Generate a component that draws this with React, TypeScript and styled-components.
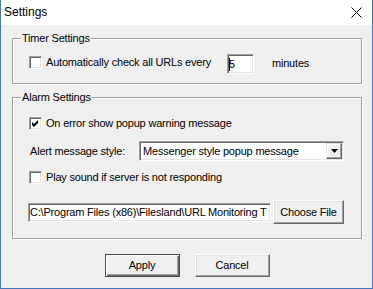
import React from 'react';
import styled, { createGlobalStyle } from 'styled-components';

const GlobalStyle = createGlobalStyle`
  html, body {
    margin: 0;
    padding: 0;
    background: #fff;
  }
  body {
    font-family: "Liberation Sans", Arial, sans-serif;
    font-size: 11px;
    line-height: 13px;
    letter-spacing: -0.2px;
    color: #000;
  }
`;

const Window = styled.div`
  width: 373px;
  height: 289px;
  box-sizing: border-box;
  border: 1px solid #4677bd;
  border-top: none;
  display: flex;
  flex-direction: column;
  background: #f0f0f0;
`;

const TitleBar = styled.div`
  height: 25px;
  flex: none;
  background: #fff;
  display: flex;
  align-items: center;
  justify-content: space-between;
  padding: 0 10px 0 3px;
`;

const Title = styled.span`
  font-size: 12px;
  letter-spacing: 0;
`;

const Client = styled.div`
  flex: 1;
  display: flex;
  flex-direction: column;
  padding: 7px 10px 0 11px;
`;

const Group = styled.fieldset<{ $pad: string; $mt?: number }>`
  margin: ${({ $mt }) => $mt || 0}px 0 0 0;
  padding: ${({ $pad }) => $pad};
  min-width: 0;
  border: 1px solid #a0a0a0;
  box-shadow: inset 1px 1px 0 #fff, 1px 1px 0 #fff;
  display: flex;
  flex-direction: column;
`;

const Legend = styled.legend`
  padding: 0 1px;
  margin-left: -8px;
  line-height: 13px;
  background: #f0f0f0;
`;

const Row = styled.div<{ $h: number; $mt?: number; $align?: string }>`
  display: flex;
  align-items: ${({ $align }) => $align || 'center'};
  height: ${({ $h }) => $h}px;
  margin-top: ${({ $mt }) => $mt || 0}px;
`;

const CheckLabel = styled.label<{ $mt?: number }>`
  display: flex;
  align-items: center;
  gap: 4px;
  height: 13px;
  margin-top: ${({ $mt }) => $mt || 0}px;
  white-space: nowrap;
`;

const Box = styled.span`
  width: 13px;
  height: 13px;
  box-sizing: border-box;
  flex: none;
  background: #fff;
  border: 1px solid;
  border-color: #a0a0a0 #fff #fff #a0a0a0;
  box-shadow: inset 1px 1px 0 #696969, inset -1px -1px 0 #e3e3e3;
  display: flex;
`;

const Field = styled.div<{ $w: number; $h: number; $ml?: number; $pl?: number }>`
  width: ${({ $w }) => $w}px;
  height: ${({ $h }) => $h}px;
  margin-left: ${({ $ml }) => $ml || 0}px;
  padding-left: ${({ $pl }) => $pl ?? 1}px;
  box-sizing: border-box;
  flex: none;
  background: #fff;
  border: 1px solid;
  border-color: #a0a0a0 #fff #fff #a0a0a0;
  box-shadow: inset 1px 1px 0 #696969, inset -1px -1px 0 #e3e3e3;
  display: flex;
  align-items: center;
  white-space: nowrap;
  overflow: hidden;
`;

const SelectField = styled(Field)`
  margin-left: auto;
`;

const Caret = styled.span`
  width: 1px;
  height: 13px;
  background: #000;
  margin-right: -1px;
`;

const SelectText = styled.span`
  flex: 1;
`;

const DropButton = styled.span`
  width: 16px;
  height: 16px;
  box-sizing: border-box;
  margin-right: 1px;
  background: #f0f0f0;
  border: 1px solid;
  border-color: #e3e3e3 #696969 #696969 #e3e3e3;
  box-shadow: inset -1px -1px 0 #a0a0a0, inset 1px 1px 0 #fff;
  display: flex;
  align-items: center;
  justify-content: center;
`;

const Text = styled.span<{ $ml?: number; $mt?: number }>`
  margin-left: ${({ $ml }) => $ml || 0}px;
  margin-top: ${({ $mt }) => $mt || 0}px;
  white-space: nowrap;
`;

const Button = styled.button<{ $w: number; $h: number; $ml?: number; $default?: boolean }>`
  width: ${({ $w }) => $w}px;
  height: ${({ $h }) => $h}px;
  margin-left: ${({ $ml }) => $ml || 0}px;
  flex: none;
  padding: 0;
  font: inherit;
  letter-spacing: inherit;
  color: #000;
  background: #f0f0f0;
  border: 1px solid;
  border-color: ${({ $default }) => ($default ? '#4b4b4b' : '#fff #696969 #696969 #fff')};
  box-shadow: ${({ $default }) =>
    $default
      ? 'inset 1px 1px 0 #fff, inset -1px -1px 0 #696969, inset -2px -2px 0 #a0a0a0'
      : 'inset -1px -1px 0 #a0a0a0, inset 1px 1px 0 #e3e3e3'};
`;

const ButtonRow = styled.div`
  display: flex;
  justify-content: center;
  gap: 15px;
  margin-top: 15px;
`;

const Tick = () => (
  <svg width="11" height="11" viewBox="0 0 11 11">
    <path d="M2 4 L4 6 L8 2 L8 5 L4 9 L2 7 Z" fill="#000" />
  </svg>
);

const App: React.FC = () => {
  return (
    <>
      <GlobalStyle />
      <Window>
        <TitleBar>
          <Title>Settings</Title>
          <svg width="11" height="11" viewBox="0 0 11 11">
            <path d="M0.5 0.5 L10.5 10.5 M10.5 0.5 L0.5 10.5" stroke="#000" strokeWidth="1" />
          </svg>
        </TitleBar>
        <Client>
          <Group $pad="9px 17px 9px 16px">
            <Legend>Timer Settings</Legend>
            <Row $h={20} $align="flex-start">
              <CheckLabel $mt={2}>
                <Box />
                Automatically check all URLs every
              </CheckLabel>
              <Field $w={27} $h={20} $ml={16} $pl={1}>
                <Caret />5
              </Field>
              <Text $ml={18} $mt={3}>minutes</Text>
            </Row>
          </Group>

          <Group $pad="13px 17px 14px 16px" $mt={7}>
            <Legend>Alarm Settings</Legend>
            <Row $h={13}>
              <CheckLabel>
                <Box>
                  <Tick />
                </Box>
                On error show popup warning message
              </CheckLabel>
            </Row>
            <Row $h={20} $mt={11}>
              <Text $ml={1}>Alert message style:</Text>
              <SelectField $w={205} $h={20} $pl={3}>
                <SelectText>Messenger style popup message</SelectText>
                <DropButton>
                  <svg width="7" height="4" viewBox="0 0 7 4">
                    <polygon points="0,0 7,0 3.5,4" fill="#000" />
                  </svg>
                </DropButton>
              </SelectField>
            </Row>
            <Row $h={13} $mt={10}>
              <CheckLabel>
                <Box />
                Play sound if server is not responding
              </CheckLabel>
            </Row>
            <Row $h={24} $mt={16}>
              <Field $w={243} $h={19} $ml={-1} $pl={1}>
                C:\Program Files (x86)\Filesland\URL Monitoring T
              </Field>
              <Button $w={71} $h={24} $ml={2}>Choose File</Button>
            </Row>
          </Group>

          <ButtonRow>
            <Button $w={75} $h={23} $default>Apply</Button>
            <Button $w={75} $h={23}>Cancel</Button>
          </ButtonRow>
        </Client>
      </Window>
    </>
  );
};

export default App;
